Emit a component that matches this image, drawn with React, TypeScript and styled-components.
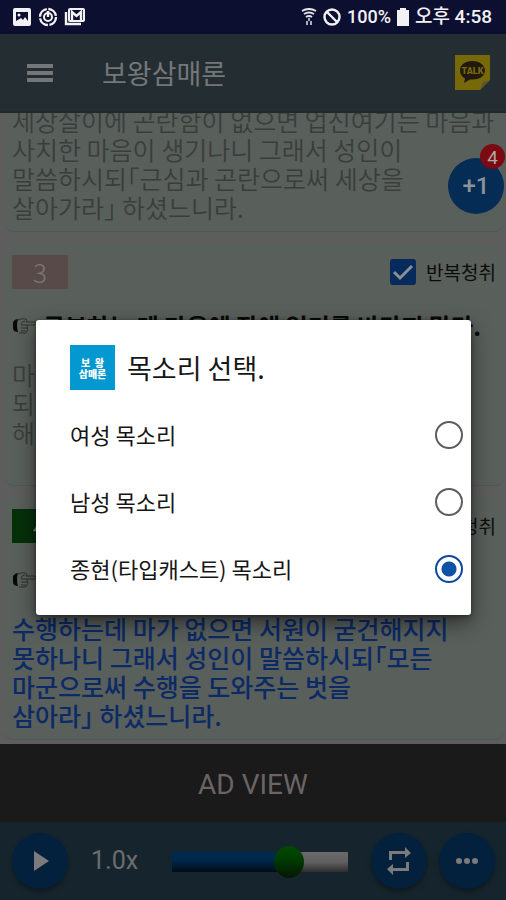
import React, { useState } from "react";
import styled, { createGlobalStyle } from "styled-components";

const GlobalStyle = createGlobalStyle`
  *, *::before, *::after { box-sizing: border-box; }
  body {
    margin: 0;
    background: #5c5d5c;
    font-family: Roboto, "Noto Sans CJK KR", sans-serif;
  }
  button { font: inherit; border: 0; padding: 0; cursor: pointer; }
`;

const Screen = styled.div`
  position: relative;
  height: 100vh;
  display: flex;
  flex-direction: column;
  overflow: hidden;
`;

const StatusBar = styled.div`
  flex: none;
  height: 34px;
  padding: 0 14px 0 12px;
  display: flex;
  align-items: center;
  justify-content: space-between;
  background: #0d0f30;
  color: #f2f2f4;
  font: 500 18px/28px Roboto, "Noto Sans CJK KR", sans-serif;
`;

const StatusGroup = styled.div`
  display: flex;
  align-items: center;
  gap: 6px;
`;

const Clock = styled.span`
  font-size: 19px;
`;

const AppBar = styled.header`
  flex: none;
  height: 79px;
  padding: 0 16px 0 26px;
  display: flex;
  align-items: center;
  background: #242d32;
  border-bottom: 2px solid #20292d;
  z-index: 1;
`;

const IconButton = styled.button`
  display: flex;
  background: none;
  color: #747779;
`;

const AppTitle = styled.h1`
  flex: 1;
  margin: 0 0 0 48px;
  color: #747779;
  font: 400 27px/40px "Noto Sans CJK KR", sans-serif;
`;

const List = styled.main`
  flex: 1;
  min-height: 0;
  padding: 0 3px 4px 5px;
  display: flex;
  flex-direction: column;
  justify-content: flex-end;
  gap: 11px;
  overflow: hidden;
`;

const Card = styled.article`
  flex: none;
  padding: 12px 7px 8px;
  border-radius: 8px;
  background: #595f5b;
  border-bottom: 1px solid #525753;
`;

const CardHead = styled.div`
  display: flex;
  align-items: center;
  justify-content: space-between;
  height: 34px;
`;

const NumberTag = styled.span<{ $active?: boolean }>`
  width: 56px;
  height: 34px;
  text-align: center;
  background: ${(p) => (p.$active ? "#06300a" : "#584a49")};
  color: ${(p) => (p.$active ? "#8a8f8a" : "#7b7776")};
  font: 300 26px/34px "Noto Sans CJK KR", sans-serif;
`;

const RepeatLabel = styled.label`
  display: flex;
  align-items: center;
  gap: 10px;
  color: #0c0d0c;
  font: 400 19px/28px "Noto Sans CJK KR", sans-serif;
`;

const CheckBox = styled.input`
  appearance: none;
  width: 26px;
  height: 26px;
  margin: 0;
  border-radius: 3px;
  background: #062a5c
    url("data:image/svg+xml,%3Csvg xmlns='http://www.w3.org/2000/svg' viewBox='0 0 26 26'%3E%3Cpath d='M4 13l6 6L22 7' fill='none' stroke='%23888f92' stroke-width='3'/%3E%3C/svg%3E");
`;

const Heading = styled.h2`
  display: flex;
  align-items: center;
  gap: 6px;
  margin: 22px 0 20px;
  color: #080908;
  font: 700 24px/29px "Noto Sans CJK KR", sans-serif;
  white-space: nowrap;
`;

const Passage = styled.p<{ $active?: boolean }>`
  min-height: 117px;
  margin: 0;
  color: ${(p) => (p.$active ? "#0c2a66" : "#3a3e3b")};
  font: ${(p) => (p.$active ? 500 : 350)} 25px/29px "Noto Sans CJK KR", sans-serif;
  white-space: pre;
`;

const PlusButton = styled.button`
  position: absolute;
  right: 2px;
  top: 158px;
  width: 56px;
  height: 56px;
  border-radius: 50%;
  background: #052c54;
  color: #8b9298;
  font: 500 24px/56px Roboto, sans-serif;
`;

const CountBadge = styled.span`
  position: absolute;
  right: -1px;
  top: -14px;
  width: 25px;
  height: 25px;
  border-radius: 50%;
  background: #7c0a12;
  color: #b3a5a6;
  font: 400 19px/27px Roboto, sans-serif;
`;

const AdView = styled.aside`
  flex: none;
  height: 78px;
  display: flex;
  align-items: center;
  justify-content: center;
  padding-top: 4px;
  background: #1a1a1a;
  color: #6a6465;
  font: 400 28px/34px Roboto, sans-serif;
`;

const Player = styled.footer`
  flex: none;
  height: 78px;
  padding: 0 11px 0 12px;
  display: flex;
  align-items: center;
  background: #16252d;
`;

const RoundButton = styled.button`
  flex: none;
  width: 56px;
  height: 56px;
  display: flex;
  align-items: center;
  justify-content: center;
  border-radius: 50%;
  background: #03203c;
  color: #7c7a7b;
  box-shadow: 0 3px 5px rgba(0, 0, 0, 0.35);
`;

const Speed = styled.span`
  margin: 0 34px 0 23px;
  color: #6d6c6e;
  font: 400 25px/32px Roboto, sans-serif;
`;

const Seek = styled.input`
  appearance: none;
  flex: 1;
  min-width: 0;
  height: 32px;
  margin: 2px 23px 0 0;
  background: none;
  &::-webkit-slider-runnable-track {
    height: 20px;
    background:
      linear-gradient(#002a52, #00264a 45%, #000d12) 0 0 / 68% 100% no-repeat,
      linear-gradient(#6a6a6a, #606060 50%, #2d2d2d);
  }
  &::-webkit-slider-thumb {
    appearance: none;
    width: 30px;
    height: 32px;
    margin-top: -6px;
    border-radius: 50%;
    background: linear-gradient(#004b00, #003a00 45%, #071607);
  }
`;

const RightButtons = styled.div`
  display: flex;
  gap: 12px;
`;

const Backdrop = styled.div`
  position: absolute;
  inset: 34px 0 0;
  z-index: 2;
  padding: 0 35px 0 36px;
  display: flex;
  align-items: center;
`;

const Dialog = styled.section`
  flex: 1;
  padding: 25px 8px 12px 34px;
  border-radius: 3px;
  background: #fff;
  box-shadow: 0 8px 20px rgba(0, 0, 0, 0.5), 0 1px 4px rgba(0, 0, 0, 0.4);
`;

const DialogHead = styled.div`
  display: flex;
  align-items: center;
  gap: 12px;
  height: 46px;
  margin-bottom: 11px;
`;

const AppIcon = styled.span`
  width: 45px;
  height: 45px;
  padding-top: 12px;
  display: grid;
  align-content: start;
  justify-items: center;
  background: #0398d0;
  color: #fff;
  font: 900 10px/11px "Noto Sans CJK KR", sans-serif;
  white-space: pre;
`;

const DialogTitle = styled.h2`
  margin: 0;
  color: #161616;
  font: 400 27px/40px "Noto Sans CJK KR", sans-serif;
`;

const Choice = styled.label`
  display: flex;
  align-items: center;
  justify-content: space-between;
  height: 67px;
  color: #161616;
  font: 400 22px/32px "Noto Sans CJK KR", sans-serif;
`;

const ChoiceName = styled.span`
  padding-bottom: 3px;
`;

const Radio = styled.input`
  appearance: none;
  width: 28px;
  height: 28px;
  margin: 0;
  border: 2px solid #5d5d5d;
  border-radius: 50%;
  &:checked {
    border-color: #0d47a1;
    background: radial-gradient(circle, #0d52a6 7px, transparent 8px);
  }
`;

const Hand = () => (
  <svg width="25" height="18" viewBox="0 0 25 18" aria-hidden="true">
    <path d="M1 5q2-3 5-3-2 6 0 13-4 0-5-3z" fill="#080908" />
    <path
      d="M6 3q4-2 8-1 2 1 0 3h9q2 1 0 3h-9q3 1 1 3 2 1 0 3 0 2-2 2H7M10 8q-2-3 3-4M9 8h5M9 11h6M9 14h5"
      fill="none"
      stroke="#2f332f"
      strokeWidth="1"
    />
  </svg>
);

type Verse = { no: number; title?: string; text: string; active?: boolean };

const verses: Verse[] = [
  {
    no: 2,
    text: "세상살이에 곤란함이 없으면 업신여기는 마음과\n사치한 마음이 생기나니 그래서 성인이\n말씀하시되｢근심과 곤란으로써 세상을\n살아가라｣ 하셨느니라.",
  },
  {
    no: 3,
    title: "공부하는 데 마음에 장애 없기를 바라지 말라.",
    text: "마음에 장애가 없으면 배우는 것이 넘치게\n되나니 그래서 성인이 말씀하시되｢장애 속에\n해탈을 얻으라｣ 하셨느니라.",
  },
  {
    no: 4,
    active: true,
    title: "수행하는 데 마 없기를 바라지 말라.",
    text: "수행하는데 마가 없으면 서원이 굳건해지지\n못하나니 그래서 성인이 말씀하시되｢모든\n마군으로써 수행을 도와주는 벗을\n삼아라｣ 하셨느니라.",
  },
];

const voices = ["여성 목소리", "남성 목소리", "종현(타입캐스트) 목소리"];

export default function App() {
  const [voice, setVoice] = useState(2);
  return (
    <Screen>
      <GlobalStyle />
      <StatusBar>
        <StatusGroup>
          <svg width="20" height="18" viewBox="0 0 20 18">
            <rect x="1" y="0" width="18" height="18" rx="2" fill="#f2f2f4" />
            <path d="M4 4h12v9l-3-4-2 3-2-2-5 3z" fill="#0d0f30" />
            <circle cx="7" cy="7" r="1.5" fill="#f2f2f4" />
          </svg>
          <svg width="20" height="20" viewBox="0 0 20 20" fill="none" stroke="#f2f2f4">
            <circle cx="10" cy="10" r="8" strokeWidth="2.4" strokeDasharray="11 1.6" />
            <circle cx="10" cy="10" r="4" strokeWidth="2" />
            <path d="M10 4v6" strokeWidth="2.4" />
          </svg>
          <svg width="22" height="18" viewBox="0 0 22 18" fill="none" stroke="#f2f2f4">
            <path d="M2 4v12h15" strokeWidth="2.4" />
            <rect x="5" y="1" width="15" height="12" rx="1" strokeWidth="2" />
            <path d="M8 13V4l4.500 4L17 4v9" strokeWidth="2.4" />
          </svg>
        </StatusGroup>
        <StatusGroup>
          <svg width="16" height="18" viewBox="0 0 16 18" fill="none" stroke="#e4e4e8" strokeWidth="2">
            <path d="M1 3q7-4 14 0M3 6q5-3 10 0M5 9q3-2 6 0" />
            <path d="M8 10v3M6 13v4M10 13v4" strokeWidth="1.500" />
          </svg>
          <svg width="18" height="18" viewBox="0 0 18 18" fill="none" stroke="#f2f2f4" strokeWidth="2.400">
            <circle cx="9" cy="9" r="7.500" />
            <path d="M4 4l10 10" />
          </svg>
          <span>100%</span>
          <svg width="12" height="18" viewBox="0 0 12 18" fill="#f2f2f4">
            <path d="M3 0h6v2h3v16H0V2h3z" />
          </svg>
          <Clock>오후 4:58</Clock>
        </StatusGroup>
      </StatusBar>

      <AppBar>
        <IconButton aria-label="메뉴">
          <svg width="28" height="20" viewBox="0 0 28 20" fill="currentColor">
            <path d="M1 1h26v4H1zM1 8h26v4H1zM1 15h26v4H1z" />
          </svg>
        </IconButton>
        <AppTitle>보왕삼매론</AppTitle>
        <IconButton aria-label="TALK">
          <svg width="35" height="35" viewBox="0 0 35 35">
            <path d="M0 0h35v25L25 35H0z" fill="#77690a" />
            <path d="M35 25L25 35l3-8z" fill="#5c5430" />
            <path d="M17.500 6C10 6 5 10 5 15.500q0 5 5 8L9 28l6-3.500h3c7 0 12-4 12-9S25 6 17.500 6z" fill="#211a0c" />
            <text x="17.500" y="19" textAnchor="middle" fontFamily="Roboto" fontWeight="900" fontSize="9" fill="#77690a">TALK</text>
          </svg>
        </IconButton>
      </AppBar>

      <List>
        {verses.map((v) => (
          <Card key={v.no}>
            {v.title && (
              <>
                <CardHead>
                  <NumberTag $active={v.active}>{v.no}</NumberTag>
                  <RepeatLabel>
                    <CheckBox type="checkbox" defaultChecked />
                    반복청취
                  </RepeatLabel>
                </CardHead>
                <Heading>
                  <Hand />
                  {v.title}
                </Heading>
              </>
            )}
            <Passage $active={v.active}>{v.text}</Passage>
          </Card>
        ))}
      </List>

      <PlusButton>
        +1
        <CountBadge>4</CountBadge>
      </PlusButton>

      <AdView>AD VIEW</AdView>

      <Player>
        <RoundButton aria-label="재생">
          <svg width="20" height="22" viewBox="0 0 20 22" fill="currentColor">
            <path d="M4 1l15 10L4 21z" />
          </svg>
        </RoundButton>
        <Speed>1.0x</Speed>
        <Seek type="range" min={0} max={100} defaultValue={70} aria-label="속도" />
        <RightButtons>
          <RoundButton aria-label="반복">
            <svg width="26" height="28" viewBox="0 0 26 28" fill="currentColor">
              <path d="M3 4h16V0l6 6-6 5V7H6v6H3zM23 24H7v4l-6-6 6-5v4h13v-6h3z" />
            </svg>
          </RoundButton>
          <RoundButton aria-label="더보기">
            <svg width="24" height="8" viewBox="0 0 24 8" fill="currentColor">
              <circle cx="4" cy="4" r="3" />
              <circle cx="12" cy="4" r="3" />
              <circle cx="20" cy="4" r="3" />
            </svg>
          </RoundButton>
        </RightButtons>
      </Player>

      <Backdrop>
        <Dialog role="dialog" aria-modal="true" aria-labelledby="voice-title">
          <DialogHead>
            <AppIcon aria-hidden="true">
              <span>보  왕</span>
              <span>삼매론</span>
            </AppIcon>
            <DialogTitle id="voice-title">목소리 선택.</DialogTitle>
          </DialogHead>
          {voices.map((name, i) => (
            <Choice key={name}>
              <ChoiceName>{name}</ChoiceName>
              <Radio type="radio" name="voice" checked={voice === i} onChange={() => setVoice(i)} />
            </Choice>
          ))}
        </Dialog>
      </Backdrop>
    </Screen>
  );
}
